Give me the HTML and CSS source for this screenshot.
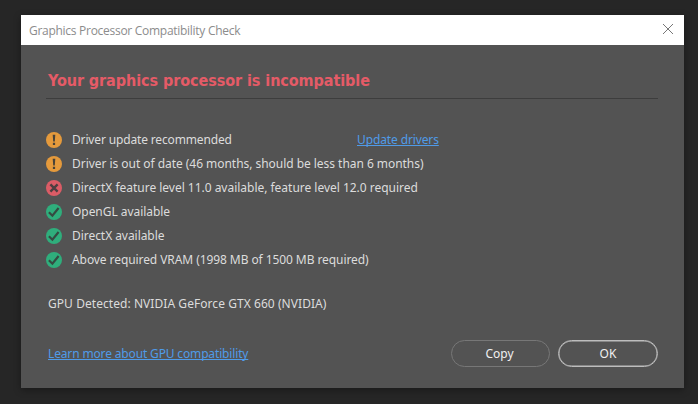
FILE: index.html
```html
<!DOCTYPE html>
<html lang="en">
  <head>
    <meta charset="UTF-8" />
    <meta name="viewport" content="width=device-width, initial-scale=1.0" />
    <title>Graphics Processor Compatibility Check</title>
    <link rel="stylesheet" href="styles.css">
  </head>
  <body>
    <div class="dialog">
      <div class="titlebar">
        <span class="title">Graphics Processor Compatibility Check</span>
        <svg class="close" viewBox="0 0 10 10">
          <path d="M0 0L10 10M10 0L0 10" />
        </svg>
      </div>

      <div class="content">
        <h1>Your graphics processor is incompatible</h1>

        <ul class="checks">
          <li>
            <svg class="icon warning" viewBox="0 0 16 16">
              <circle cx="8" cy="8" r="8" />
              <path d="M6.7 2.8h2.6L8.8 9.4H7.2zM6.9 10.8h2.2v2.1H6.9z" />
            </svg>
            <span class="first">Driver update recommended</span>
            <a href="#" class="update">Update drivers</a>
          </li>
          <li>
            <svg class="icon warning" viewBox="0 0 16 16">
              <circle cx="8" cy="8" r="8" />
              <path d="M6.7 2.8h2.6L8.8 9.4H7.2zM6.9 10.8h2.2v2.1H6.9z" />
            </svg>
            <span class="age">Driver is out of date (46 months, should be less than 6 months)</span>
          </li>
          <li>
            <svg class="icon error" viewBox="0 0 16 16">
              <circle cx="8" cy="8" r="8" />
              <path d="M4.4 4.4l7.2 7.2M11.6 4.4l-7.2 7.2" />
            </svg>
            <span class="level">DirectX feature level 11.0 available, feature level 12.0 required</span>
          </li>
          <li>
            <svg class="icon ok" viewBox="0 0 16 16">
              <circle cx="8" cy="8" r="8" />
              <path d="M2.9 8.2l3.5 3.5 6.2-7.7" />
            </svg>
            <span class="available">OpenGL available</span>
          </li>
          <li>
            <svg class="icon ok" viewBox="0 0 16 16">
              <circle cx="8" cy="8" r="8" />
              <path d="M2.9 8.2l3.5 3.5 6.2-7.7" />
            </svg>
            <span class="available">DirectX available</span>
          </li>
          <li>
            <svg class="icon ok" viewBox="0 0 16 16">
              <circle cx="8" cy="8" r="8" />
              <path d="M2.9 8.2l3.5 3.5 6.2-7.7" />
            </svg>
            <span class="vram">Above required VRAM (1998 MB of 1500 MB required)</span>
          </li>
        </ul>

        <p class="detected">GPU Detected: NVIDIA GeForce GTX 660 (NVIDIA)</p>

        <div class="footer">
          <a href="#" class="learn">Learn more about GPU compatibility</a>
          <button>Copy</button>
          <button class="primary">OK</button>
        </div>
      </div>
    </div>
  </body>
</html>
```

FILE: styles.css
```css
body {
  margin: 0;
  height: 404px;
  overflow: hidden;
  background: #262626;
  font-family: "Noto Sans", sans-serif;
  font-size: 12px;
  color: #dcdcdc;
}
.dialog {
  width: 663px;
  height: 373px;
  margin: 15px 0 0 21px;
  background: #535353;
  box-shadow: 0 2px 7px rgba(0, 0, 0, 0.35);
  display: flow-root;
  white-space: nowrap;
}
.titlebar {
  display: flex;
  align-items: center;
  justify-content: space-between;
  height: 30px;
  padding: 0 11px 0 8px;
  box-sizing: border-box;
  background: #fff;
}
.title {
  font-family: "Open Sans", sans-serif;
  letter-spacing: -0.28px;
  color: #8c8c8c;
}
.close {
  width: 10px;
  height: 10px;
  margin-bottom: 2px;
  fill: none;
  stroke: #777;
  overflow: visible;
}
.content {
  padding: 18px 26px 0 25px;
}
h1 {
  display: flex;
  align-items: center;
  height: 35px;
  margin: 0;
  padding-left: 2px;
  border-bottom: 1px solid #3d3d3d;
  font-family: "DejaVu Sans Condensed", "DejaVu Sans", sans-serif;
  font-stretch: condensed;
  font-size: 16px;
  font-weight: 700;
  letter-spacing: -0.07px;
  color: #e55b67;
}
.checks {
  list-style: none;
  margin: 29px 0 0;
  padding: 0;
}
.checks li {
  display: flex;
  align-items: center;
  height: 24px;
}
.checks span,
.checks a {
  margin-bottom: 2px;
}
.icon {
  width: 16px;
  height: 16px;
  margin-right: 10px;
  flex: none;
}
.warning circle {
  fill: #e59a3c;
}
.warning path {
  fill: #484238;
}
.error circle {
  fill: #db5c66;
}
.error path {
  fill: none;
  stroke: #4d3f41;
  stroke-width: 2.4;
}
.ok circle {
  fill: #2fae7c;
}
.ok path {
  fill: none;
  stroke: #354b42;
  stroke-width: 2.2;
}
.first {
  width: 285px;
  letter-spacing: -0.15px;
}
.age {
  letter-spacing: -0.04px;
}
.level {
  letter-spacing: -0.02px;
}
.available {
  letter-spacing: -0.05px;
}
.vram {
  letter-spacing: -0.08px;
}
a {
  color: #4f9be8;
  text-decoration: underline;
  text-decoration-skip-ink: none;
}
.update {
  letter-spacing: -0.12px;
}
.detected {
  display: flex;
  align-items: center;
  height: 22px;
  margin: 20px 0 0 2px;
  letter-spacing: 0.06px;
}
.footer {
  display: flex;
  align-items: center;
  height: 27px;
  margin: 26px 0 0 2px;
}
.learn {
  margin-right: auto;
  letter-spacing: -0.15px;
}
button {
  width: 99px;
  height: 27px;
  margin-left: 9px;
  padding: 0 2px 0 0;
  border: 1px solid #777;
  border-radius: 14px;
  background: transparent;
  color: #f0f0f0;
  font: inherit;
}
button.primary {
  width: 100px;
  margin-left: 8px;
  padding: 0;
  border: 1.5px solid #bdbdbd;
  box-shadow: inset 0 0 0 0.5px #bdbdbd;
}
```
